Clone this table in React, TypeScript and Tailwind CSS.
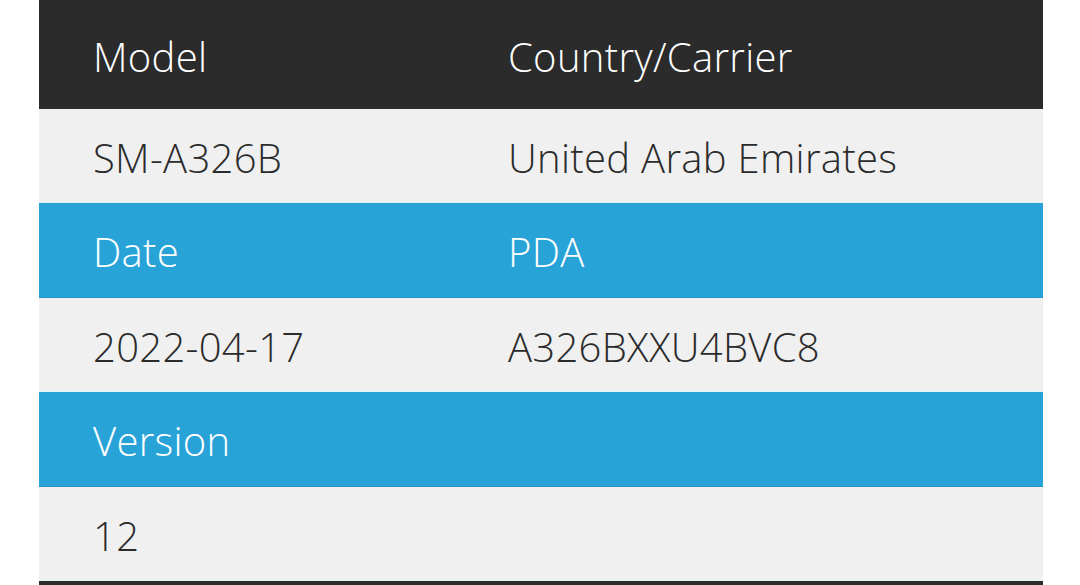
import React from "react";

type Row = { kind: "head" | "blue" | "gray"; a: string; b: string; h: string };

const rows: Row[] = [
  { kind: "head", a: "Model", b: "Country/Carrier", h: "h-[109px]" },
  { kind: "gray", a: "SM-A326B", b: "United Arab Emirates", h: "h-[94px]" },
  { kind: "blue", a: "Date", b: "PDA", h: "h-[95px]" },
  { kind: "gray", a: "2022-04-17", b: "A326BXXU4BVC8", h: "h-[94px]" },
  { kind: "blue", a: "Version", b: "", h: "h-[95px]" },
  { kind: "gray", a: "12", b: "", h: "h-[94px]" },
];

export default function App() {
  return (
    <div
      className="w-[1080px] h-[585px] bg-white overflow-hidden"
      style={{ fontFamily: "'Open Sans', 'Noto Sans', sans-serif" }}
    >
      <div className="ml-[39px] w-[1004px] flex flex-col">
        {rows.map((r, i) => {
          const bg =
            r.kind === "head"
              ? "bg-[#2b2b2b] text-white"
              : r.kind === "blue"
              ? "bg-[#27a3d8] text-white border-b border-[#2495c6]"
              : "bg-[#f0f0f0] text-[#2b2b2b] border-b border-[#e2f3fa]";
          return (
            <div key={i} className={`grid grid-cols-[415px_1fr] items-center pt-[4px] ${r.h} ${bg}`}>
              <div className="pl-[54px] text-[40px] font-light leading-none tracking-[0.3px]">{r.a}</div>
              <div className="pl-[54px] text-[40px] font-light leading-none tracking-[0.3px]">{r.b}</div>
            </div>
          );
        })}
        <div className="h-[10px] bg-[#2b2b2b]" />
      </div>
    </div>
  );
}
